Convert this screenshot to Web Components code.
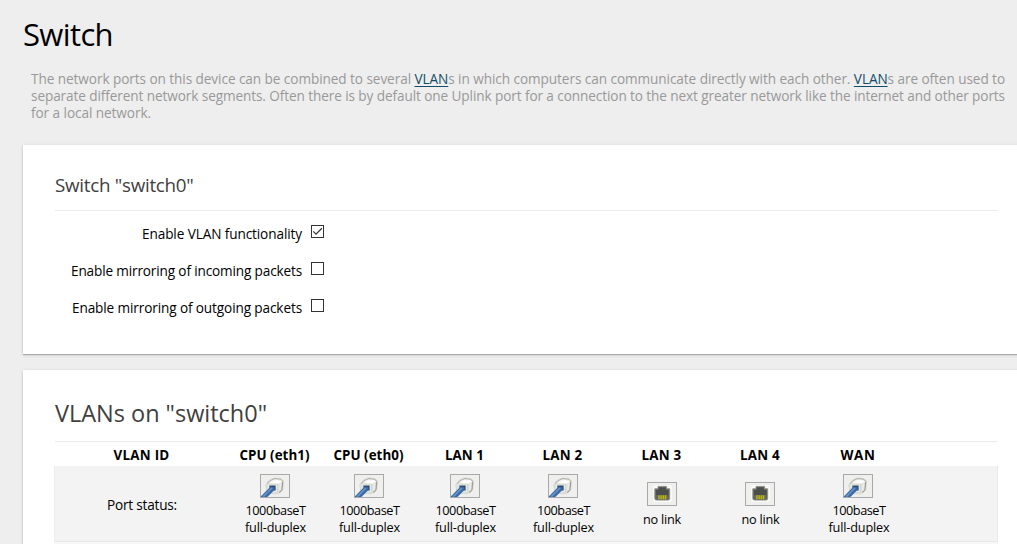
<!DOCTYPE html>
<html lang="en">
<head>
<meta charset="utf-8">
<title>Switch</title>
<style>
html,body{margin:0;height:100%;overflow:hidden;background:#eee}
body{font-family:"Open Sans","Noto Sans",sans-serif;color:#000}
</style>
</head>
<body>
<switch-page></switch-page>
<script>
const define = (name, html, init) => customElements.define(name, class extends HTMLElement {
  constructor() {
    super();
    this.attachShadow({ mode: 'open' }).innerHTML = html;
  }
  connectedCallback() { if (init) init(this, this.shadowRoot); }
});

// One line of text tracked so that its advance equals the "w" attribute.
define('fit-text', `<style>:host{display:inline-block;white-space:nowrap}</style><slot></slot>`, el => {
  const natural = el.getBoundingClientRect().width;
  el.style.letterSpacing = ((el.getAttribute('w') - natural) / el.textContent.length) + 'px';
});

define('abbr-link', `<style>:host{display:inline}a{color:#0f4d6b;text-decoration:underline;text-decoration-thickness:1px;text-underline-offset:2px}</style><a><slot></slot></a>`);

define('page-intro', `<style>
:host{display:block;padding:0 0 0 31px;box-sizing:border-box;font-size:13.6px;line-height:17px;color:#999}
div{height:17px}</style>
<div><fit-text w="974">The network ports on this device can be combined to several <abbr-link>VLAN</abbr-link>s in which computers can communicate directly with each other. <abbr-link>VLAN</abbr-link>s are often used to</fit-text></div>
<div><fit-text w="974">separate different network segments. Often there is by default one Uplink port for a connection to the next greater network like the internet and other ports</fit-text></div>
<div><fit-text w="120">for a local network.</fit-text></div>`);

define('page-title', `<style>:host{display:block;font-size:31px;line-height:40px;height:41px;padding:14px 0 0 23px}</style><slot></slot>`);

define('page-card', `<style>
:host{display:block;box-sizing:border-box;margin-left:23px;width:1040px;padding:0 0 0 32px;background:#fff;box-shadow:0 1px 3px rgba(0,0,0,.16),0 1px 1px rgba(0,0,0,.2)}
</style><slot></slot>`);

define('card-heading', `<style>:host{display:block;box-sizing:border-box;width:942px;border-bottom:1px solid #eaeaea;color:#404040;white-space:nowrap}</style><slot></slot>`);

define('check-row', `<style>
:host{display:flex;align-items:flex-start;height:37px;font-size:13.6px;line-height:19px}
.l{width:247px;text-align:right;padding-top:1px}
svg{display:block;margin:2px 0 0 9px}
</style><div class="l"><slot></slot></div>
<svg width="13" height="13" viewBox="0 0 13 13" fill="none"><rect x=".5" y=".5" width="12" height="12" stroke="#333" fill="#fff"/><path id="t" stroke="#333" stroke-width="1.2"/></svg>`,
(el, r) => { if (el.hasAttribute('checked')) r.querySelector('#t').setAttribute('d', 'M2.3 6.4 5 9.1 10.9 3.3'); });

define('port-icon', `<style>:host{display:block;width:30px;height:24px;margin:0 auto}svg{display:none}
:host([up]) .up,:host(:not([up])) .down{display:block}</style>
<svg class="up" width="30" height="24" viewBox="0 0 30 24">
<rect x=".5" y=".5" width="29" height="23" fill="#efefed" stroke="#a9aaa8"/>
<path d="M5.5 11 9.5 5.8 14.5 3.8 21 4.5 23.5 7 22.8 15.8 18.5 19.8 8 19.6Z" fill="#f6f6f3" stroke="#d6d7d2" stroke-width=".8"/>
<path d="M7.2 9.6 10.5 6.4 14.8 4.6 20.4 5.2 22.6 6.9" fill="none" stroke="#b0b3ab" stroke-width="1.1"/>
<path d="M11.5 8.6 15.2 6.6 21 7.2 17.8 9.8Z" fill="#fff"/>
<path d="M18 10.2 22.9 7.4 22.2 15.7 18.2 19.3Z" fill="#dcddd7"/>
<path d="M22.8 7.4 22 15.8 19.3 18.6" fill="none" stroke="#999d94" stroke-width="1.1"/>
<path d="M20.3 9.6 19.8 16.4" stroke="#f6f6f4" stroke-width="1.1"/>
<path d="M6.8 9.9 17.7 10.1 17.5 18.9 7 18.8Z" fill="#e9eae6" stroke="#c5c8c0" stroke-width=".7"/>
<path d="M9.4 11.6H15.6V16.5H13L9.4 14Z" fill="#2f4a6d"/>
<path d="M1 23 1 22.3 10.4 12.8 14.6 13.3 14.6 15.7 7.4 23Z" fill="#3a69a8"/>
<path d="M3.2 22.6 12 14" stroke="#6c96c9" stroke-width="1.5"/>
</svg>
<svg class="down" width="30" height="24" viewBox="0 0 30 24">
<rect x=".5" y=".5" width="29" height="23" fill="#efefed" stroke="#a9aaa8"/>
<rect x="6" y="3" width="19" height="17" rx="3" fill="#fafaf8"/>
<path d="M11 4.4H19.6V6.8H22.7V16.6Q22.7 18.1 21 18.1H9.6Q7.8 18.1 7.8 16.6V6.8H11Z" fill="#646662" stroke="#8c8e88" stroke-width=".9"/>
<path d="M11.7 5.5H18.8V8H21.5V13H9V8H11.7Z" fill="#4c4e4b"/>
<rect x="11" y="13.2" width="8.6" height="4" fill="#8b891f"/>
<path d="M12 13.4V17.2M14.2 13.4V17.2M16.4 13.4V17.2M18.6 13.4V17.2" stroke="#beb829" stroke-width="1"/>
</svg>`);

define('port-status', `<style>
:host{display:flex;flex-direction:column;align-items:center;justify-content:center;height:75px;padding-top:2px;box-sizing:border-box;font-size:12.7px;line-height:17px}
.t{padding:5px 0 0 1px;text-align:center;white-space:nowrap}
:host([up]) .t{padding:4px 0 0 2px}
</style><port-icon></port-icon><div class="t"><slot></slot></div>`,
(el, r) => { if (el.hasAttribute('up')) r.querySelector('port-icon').setAttribute('up', ''); });

define('vlan-table', `<style>
:host{display:block;margin-left:-1px;width:944px}
.row{display:grid;grid-template-columns:175px 91px 97px 95px 101px 97px 100px 96px;text-align:center}
.head{height:24px;font-weight:700;font-size:13.4px;line-height:26px;white-space:nowrap}
.body{background:#f3f3f3;height:75px;border-bottom:1px solid #e9e9e9;box-shadow:inset -1px 0 #ebebeb,inset 1px 0 #ededed}
.next{background:#f7f7f7;height:30px}
.label{font-size:13.6px;line-height:77px;padding-left:1px}
</style>
<div class="row head"><div><fit-text w="56">VLAN ID</fit-text></div><div><fit-text w="70">CPU (eth1)</fit-text></div><div><fit-text w="70">CPU (eth0)</fit-text></div><div><fit-text w="39">LAN 1</fit-text></div><div><fit-text w="40">LAN 2</fit-text></div><div><fit-text w="40">LAN 3</fit-text></div><div><fit-text w="40">LAN 4</fit-text></div><div><fit-text w="35">WAN</fit-text></div></div>
<div class="row body"><div class="label"><fit-text w="70">Port status:</fit-text></div>
<port-status up><fit-text w="60">1000baseT</fit-text><br><fit-text w="61">full-duplex</fit-text></port-status>
<port-status up><fit-text w="60">1000baseT</fit-text><br><fit-text w="61">full-duplex</fit-text></port-status>
<port-status up><fit-text w="60">1000baseT</fit-text><br><fit-text w="61">full-duplex</fit-text></port-status>
<port-status up><fit-text w="53">100baseT</fit-text><br><fit-text w="61">full-duplex</fit-text></port-status>
<port-status><fit-text w="38">no link</fit-text></port-status>
<port-status><fit-text w="38">no link</fit-text></port-status>
<port-status up><fit-text w="53">100baseT</fit-text><br><fit-text w="61">full-duplex</fit-text></port-status></div>
<div class="next"></div>`);

define('switch-page', `<style>
:host{display:block;height:544px;overflow:hidden}
page-intro{padding-top:15px;height:90px}
.one{height:209px}
.one card-heading{height:66px;font-size:18.8px;line-height:80px}
.rows{padding-top:12px}
.two{margin-top:16px;height:200px}
.two card-heading{height:72px;font-size:23.5px;line-height:87px}
</style>
<page-title><fit-text w="90">Switch</fit-text></page-title>
<page-intro></page-intro>
<page-card class="one"><card-heading><fit-text w="138.5">Switch "switch0"</fit-text></card-heading>
<div class="rows">
<check-row checked><fit-text w="160">Enable VLAN functionality</fit-text></check-row>
<check-row><fit-text w="231">Enable mirroring of incoming packets</fit-text></check-row>
<check-row><fit-text w="230">Enable mirroring of outgoing packets</fit-text></check-row>
</div></page-card>
<page-card class="two"><card-heading><fit-text w="212">VLANs on "switch0"</fit-text></card-heading>
<vlan-table></vlan-table></page-card>`);
</script>
</body>
</html>
